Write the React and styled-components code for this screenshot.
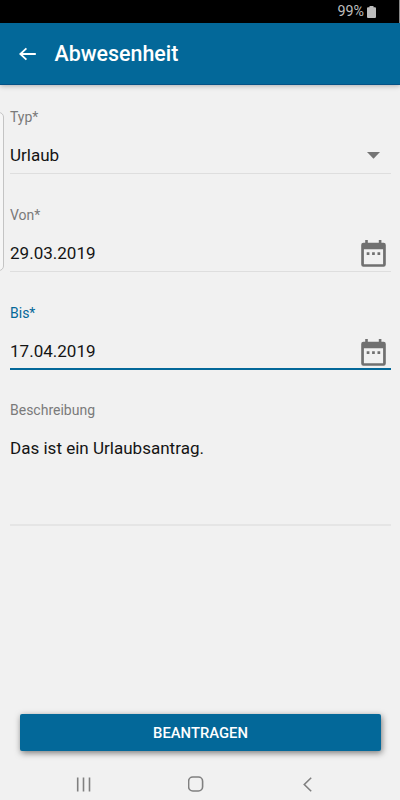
import React from 'react'
import styled, { createGlobalStyle, css } from 'styled-components'

const App = () => (
  <>
    <GlobalStyle />
    <Screen>
      <StatusBar>
        <Percent>99%</Percent>
        <BatteryIcon />
      </StatusBar>
      <Header>
        <BackIcon />
        <Title>Abwesenheit</Title>
      </Header>
      <Form>
        <EdgeHandle />
        <Field label="Typ*" value="Urlaub" icon={<CaretIcon />} />
        <Field label="Von*" value="29.03.2019" icon={<CalendarIcon />} />
        <Field label="Bis*" value="17.04.2019" icon={<CalendarIcon />} active />
        <Field label="Beschreibung" value="Das ist ein Urlaubsantrag." multiline />
      </Form>
      <Submit>BEANTRAGEN</Submit>
      <Navigation>
        <RecentsIcon />
        <HomeIcon />
        <PreviousIcon />
      </Navigation>
    </Screen>
  </>
)

export default App

const Field = ({ label, value, icon, active, multiline }) => (
  <FieldBody $active={active} $multiline={multiline}>
    <Label $active={active}>{label}</Label>
    <ValueRow>
      <Value>{value}</Value>
      {icon}
    </ValueRow>
  </FieldBody>
)

const BatteryIcon = () => (
  <svg width="9" height="12" viewBox="0 0 9 12">
    <path d="M2.5 0h4v1.2H8q1 0 1 1V11q0 1-1 1H1q-1 0-1-1V2.2q0-1 1-1h1.5z" fill="#bdbdbd" />
  </svg>
)

const BackIcon = () => (
  <svg width="18" height="14" viewBox="0 0 18 14" fill="none" stroke="#fff" strokeWidth="1.8">
    <path d="M16.8 7H1.6M7.4 1.3L1.3 7l6.1 5.7" />
  </svg>
)

const CaretIcon = () => (
  <Caret width="13" height="7" viewBox="0 0 13 7">
    <path d="M0 0h13L6.5 6.8z" fill="#757575" />
  </Caret>
)

const CalendarIcon = () => (
  <Calendar width="25" height="27" viewBox="0 0 25 27" fill="#707070">
    <path
      fillRule="evenodd"
      d="M4.2 0h2.6v2.7h11V0h2.6v2.7H22.6q2.2 0 2.2 2.2v19.7q0 2.2-2.2 2.2H2.4q-2.2 0-2.2-2.2V4.9q0-2.2 2.2-2.2h1.8zM2.9 9.3v15h19.2v-15z"
    />
    <path d="M5.7 12.2h2.7v2.7H5.7zM11.1 12.2h2.7v2.7h-2.7zM16.5 12.2h2.7v2.7h-2.7z" />
  </Calendar>
)

const RecentsIcon = () => (
  <svg width="15" height="15" viewBox="0 0 15 15" stroke="#808080" strokeWidth="1.6">
    <path d="M1.7 .5v14M7.5 .5v14M13.5 .5v14" />
  </svg>
)

const HomeIcon = () => (
  <svg width="16" height="16" viewBox="0 0 16 16" fill="none" stroke="#808080" strokeWidth="1.6">
    <rect x=".6" y="1" width="14" height="14" rx="4.2" />
  </svg>
)

const PreviousIcon = () => (
  <svg width="9" height="15" viewBox="0 0 9 15" fill="none" stroke="#808080" strokeWidth="1.6">
    <path d="M8.2 .8L1.3 7.5l6.9 6.7" />
  </svg>
)

const GlobalStyle = createGlobalStyle`
  body {
    margin: 0;
    background: #f1f1f1;
    font-family: Roboto, sans-serif;
  }
`

const Screen = styled.div`
  display: flex;
  flex-direction: column;
  width: 400px;
  height: 800px;
  overflow: hidden;
  background: #f1f1f1;
`

const StatusBar = styled.div`
  display: flex;
  align-items: center;
  justify-content: flex-end;
  gap: 3px;
  box-sizing: border-box;
  height: 23px;
  padding-right: 23px;
  border-right: 1px solid #8a8a8a;
  background: #000;
  color: #bdbdbd;
`

const Percent = styled.span`
  font-size: 14.3px;
  line-height: 23px;
`

const Header = styled.header`
  display: flex;
  align-items: center;
  gap: 18px;
  box-sizing: border-box;
  height: 62px;
  padding-left: 18.5px;
  border-bottom: 1px solid #045286;
  background: #036899;
  box-shadow: 0 1px 5px rgba(0, 0, 0, 0.28);
`

const Title = styled.h1`
  margin: 0;
  color: #fff;
  font-size: 21.4px;
  font-weight: 500;
  line-height: 30px;
`

const Form = styled.main`
  position: relative;
  flex: 1;
  padding: 22px 9px 0 10px;
`

const EdgeHandle = styled.div`
  position: absolute;
  top: 27px;
  left: -8px;
  box-sizing: border-box;
  width: 12px;
  height: 159px;
  border: 1px solid #c4c4c4;
  border-radius: 5px;
  background: #f6f6f6;
`

const FieldBody = styled.div`
  display: flex;
  flex-direction: column;
  box-sizing: border-box;
  height: ${({ $multiline }) => $multiline ? '126px' : '67px'};
  margin-bottom: 31px;
  border-bottom: 1px solid #dedede;

  ${({ $active }) => $active && css`
    margin-bottom: 30px;
    border-bottom: 2px solid #036899;

    svg {
      margin-top: 2px;
    }
  `}

  ${({ $multiline }) => $multiline && css`
    border-bottom: 2px solid #e5e5e5;
  `}
`

const Label = styled.label`
  color: ${({ $active }) => $active ? '#036899' : '#7a7a7a'};
  font-size: 14px;
  line-height: 20px;
`

const ValueRow = styled.div`
  display: flex;
  align-items: center;
  justify-content: space-between;
  height: 38px;
  padding-top: 9px;
`

const Value = styled.span`
  color: #141414;
  font-size: 17.05px;
  line-height: 38px;
`

const Caret = styled.svg`
  margin-right: 11px;
`

const Calendar = styled.svg`
  margin-right: 5px;
`

const Submit = styled.button`
  height: 37px;
  margin: 0 19px 0 20px;
  padding: 0 0 1px;
  border: 0;
  border-radius: 2px;
  background: #036899;
  box-shadow: 1px 2px 6px rgba(0, 0, 0, 0.5);
  color: #fff;
  font-family: inherit;
  font-size: 14.8px;
  font-weight: 500;
  line-height: 38px;
`

const Navigation = styled.nav`
  display: grid;
  grid-template-columns: 15px 16px 9px;
  column-gap: 96.5px;
  align-items: center;
  height: 49px;
  padding: 17px 0 0 76px;
  box-sizing: border-box;

  svg:last-child {
    margin-left: 3px;
  }
`
